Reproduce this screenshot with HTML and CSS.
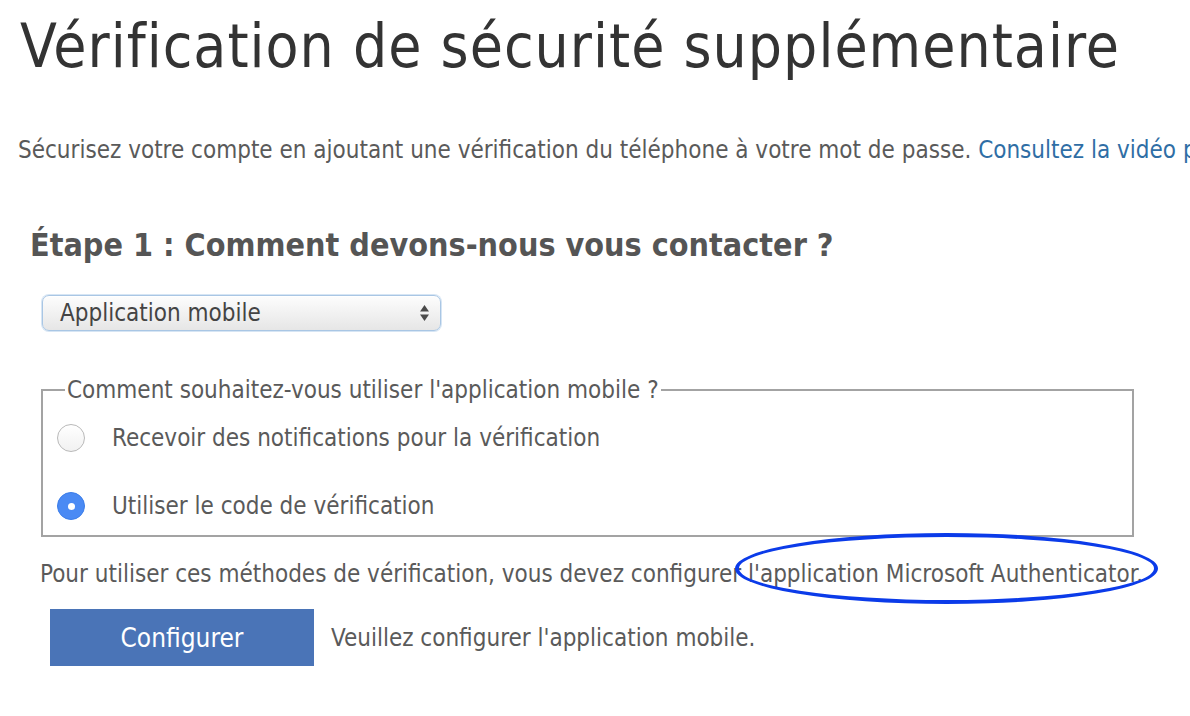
FILE: index.html
```html
<!DOCTYPE html>
<html lang="fr">
<head>
<meta charset="utf-8">
<title>Vérification de sécurité supplémentaire</title>
<link rel="stylesheet" href="styles.css">
</head>
<body>
<div class="page">
  <h1 class="title">Vérification de sécurité supplémentaire</h1>
  <p class="intro">Sécurisez votre compte en ajoutant une vérification du téléphone à votre mot de passe. <a class="link" href="#">Consultez la vidéo pour savoir comment sécuriser votre compte</a></p>
  <h2 class="step">Étape 1 : Comment devons-nous vous contacter ?</h2>
  <div class="select">
    <span class="select-text">Application mobile</span>
    <svg class="select-arrows" width="11" height="18" viewBox="0 0 11 18"><path d="M5.5 1 L10 7.5 H1 Z" fill="#4a4a4a"/><path d="M5.5 17 L10 10.5 H1 Z" fill="#4a4a4a"/></svg>
  </div>
  <fieldset class="options">
    <legend class="legend">Comment souhaitez-vous utiliser l'application mobile ?</legend>
    <div class="option">
      <span class="radio"></span>
      <span class="option-label">Recevoir des notifications pour la vérification</span>
    </div>
    <div class="option">
      <span class="radio radio-on"></span>
      <span class="option-label">Utiliser le code de vérification</span>
    </div>
  </fieldset>
  <div class="note-wrap">
    <p class="note">Pour utiliser ces méthodes de vérification, vous devez configurer l'application Microsoft Authenticator.</p>
    <span class="circle-mark"></span>
  </div>
  <div class="actions">
    <button class="btn">Configurer</button>
    <span class="hint">Veuillez configurer l'application mobile.</span>
  </div>
</div>
</body>
</html>
```
FILE: styles.css
```css
html, body {
  margin: 0;
  padding: 0;
  background: #fff;
  overflow: hidden;
}
body {
  font-family: "DejaVu Sans Condensed", "DejaVu Sans", sans-serif;
  color: #5a5a5a;
}
.page {
  padding: 0 0 0 18px;
  width: 1300px;
}
.title {
  margin: 11px 0 0 2px;
  font-size: 60px;
  letter-spacing: 1px;
  font-weight: normal;
  color: #333;
  line-height: 70px;
}
.intro {
  margin: 54px 0 0 0;
  font-size: 24px;
  line-height: 30px;
  white-space: nowrap;
}
.link {
  color: #2f6ea5;
  text-decoration: none;
}
.step {
  margin: 62px 0 0 12px;
  font-size: 32px;
  font-weight: bold;
  color: #555;
  line-height: 36px;
}
.select {
  margin: 32px 0 0 24px;
  width: 399px;
  height: 36px;
  box-sizing: border-box;
  border: 1px solid #a9c6e4;
  border-radius: 7px;
  background: linear-gradient(#fdfdfd, #e6e6e6);
  box-shadow: 0 0 0 1px #d6e5f4, inset 0 1px 1px #fff;
  display: flex;
  align-items: center;
  justify-content: space-between;
  padding: 0 10px 0 17px;
}
.select-text {
  font-size: 24px;
  color: #444;
}
.options {
  margin: 45px 0 0 23px;
  width: 1093px;
  box-sizing: border-box;
  border: 2px solid #a3a3a3;
  padding: 14px 0 9px 14px;
  display: flex;
  flex-direction: column;
  gap: 28px;
}
.legend {
  font-size: 24px;
  line-height: 28px;
  padding: 0 2px;
  margin-left: 8px;
  color: #5a5a5a;
}
.option {
  display: flex;
  align-items: center;
  height: 40px;
}
.radio {
  width: 28px;
  height: 28px;
  border-radius: 50%;
  border: 1px solid #b9b9b9;
  background: linear-gradient(#fff, #f1f1f1);
  box-sizing: border-box;
  margin-right: 27px;
  flex: none;
  position: relative;
}
.radio-on {
  border-color: #3b7de9;
  background: #4a8af4;
}
.radio-on::after {
  content: "";
  position: absolute;
  left: 10px;
  top: 10px;
  width: 7px;
  height: 7px;
  border-radius: 50%;
  background: #fff;
}
.option-label {
  font-size: 24px;
}
.note-wrap {
  position: relative;
  margin: 22px 0 0 22px;
}
.note {
  margin: 0;
  font-size: 24px;
  line-height: 30px;
}
.circle-mark {
  position: absolute;
  left: 695px;
  top: -26px;
  width: 423px;
  height: 71px;
  border: 4px solid #0b3be9;
  border-radius: 50%;
  box-sizing: border-box;
}
.actions {
  margin: 20px 0 0 32px;
  display: flex;
  align-items: center;
}
.btn {
  width: 264px;
  height: 57px;
  border: none;
  background: #4a74b7;
  color: #fff;
  font-family: inherit;
  font-size: 26px;
  margin-right: 17px;
}
.hint {
  font-size: 24px;
}
```
